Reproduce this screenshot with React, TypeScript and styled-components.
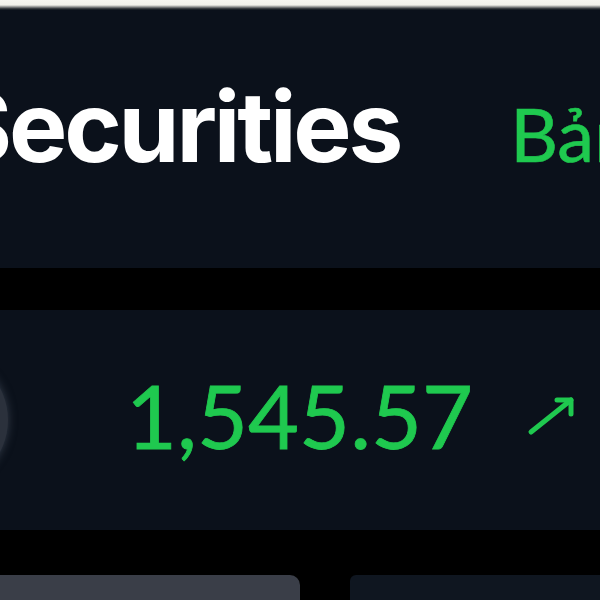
import React from "react";
import styled, { createGlobalStyle } from "styled-components";

const GlobalStyle = createGlobalStyle`
  html, body { margin: 0; padding: 0; background: #000; }
  body { font-family: Lato, "Noto Sans", sans-serif; overflow: hidden; }
`;

const Screen = styled.div`
  width: 600px;
  height: 600px;
  overflow: hidden;
  background: #000;
  display: flex;
  flex-direction: column;
`;

const TopStrip = styled.div`
  height: 10px;
  flex: none;
  background: linear-gradient(#f6f5f0 0%, #f1f0ea 50%, #3a3d42 85%, #0b111b 100%);
`;

const Header = styled.header`
  height: 258px;
  flex: none;
  background: #0b111b;
  display: flex;
  align-items: flex-start;
  overflow: hidden;
`;

const HeaderRow = styled.div`
  display: flex;
  align-items: baseline;
  margin-left: -52px;
  margin-top: 68px;
  white-space: nowrap;
`;

const Brand = styled.h1`
  margin: 0;
  font-family: Inter, sans-serif;
  font-weight: 700;
  font-size: 98px;
  line-height: 1;
  color: #ffffff;
  letter-spacing: -3.2px;
`;

const NavLink = styled.span<{ $active?: boolean }>`
  margin-left: 110px;
  font-family: Lato, sans-serif;
  font-weight: 400;
  font-size: 74px;
  line-height: 1;
  color: ${(p) => (p.$active ? "#1fc94f" : "#cbd5e1")};
  -webkit-text-stroke: 0.6px currentColor;
`;

const Gap = styled.div<{ $h: number }>`
  height: ${(p) => p.$h}px;
  flex: none;
  background: #000;
`;

const IndexCard = styled.section`
  height: 220px;
  flex: none;
  background: #0b111b;
  display: flex;
  align-items: center;
  overflow: hidden;
`;

const Avatar = styled.div`
  width: 136px;
  height: 136px;
  flex: none;
  margin-left: -128px;
  border-radius: 50%;
  background: #2b313c;
  box-shadow: 0 0 10px rgba(80, 90, 105, 0.6);
`;

const Value = styled.span`
  margin-left: 118px;
  margin-top: -10px;
  font-family: Lato, sans-serif;
  font-weight: 400;
  font-size: 88px;
  line-height: 1;
  color: #1fc94f;
  -webkit-text-stroke: 0.8px #1fc94f;
`;

const Trend = styled.svg`
  margin-left: 52px;
  margin-top: -6px;
  width: 54px;
  height: 54px;
  flex: none;
`;

const BottomRow = styled.div`
  display: flex;
  gap: 50px;
  flex: 1;
`;

const Tab = styled.div<{ $active?: boolean }>`
  width: ${(p) => (p.$active ? "300px" : "auto")};
  flex: ${(p) => (p.$active ? "none" : "1")};
  background: ${(p) => (p.$active ? "#3a3e48" : "#0f1620")};
  border-radius: ${(p) => (p.$active ? "0 10px 0 0" : "6px 0 0 0")};
`;

export default function App() {
  return (
    <>
      <GlobalStyle />
      <Screen>
        <TopStrip />
        <Header>
          <HeaderRow>
            <Brand>Securities</Brand>
            <NavLink $active>Bảng giá</NavLink>
          </HeaderRow>
        </Header>
        <Gap $h={42} />
        <IndexCard>
          <Avatar />
          <Value>1,545.57</Value>
          <Trend viewBox="0 0 54 54" fill="none" stroke="#1fc94f" strokeWidth="5" strokeLinecap="round" strokeLinejoin="round">
            <path d="M6 42 L46 10" />
            <path d="M32 10 H46 V24" />
          </Trend>
        </IndexCard>
        <Gap $h={45} />
        <BottomRow>
          <Tab $active />
          <Tab />
        </BottomRow>
      </Screen>
    </>
  );
}
